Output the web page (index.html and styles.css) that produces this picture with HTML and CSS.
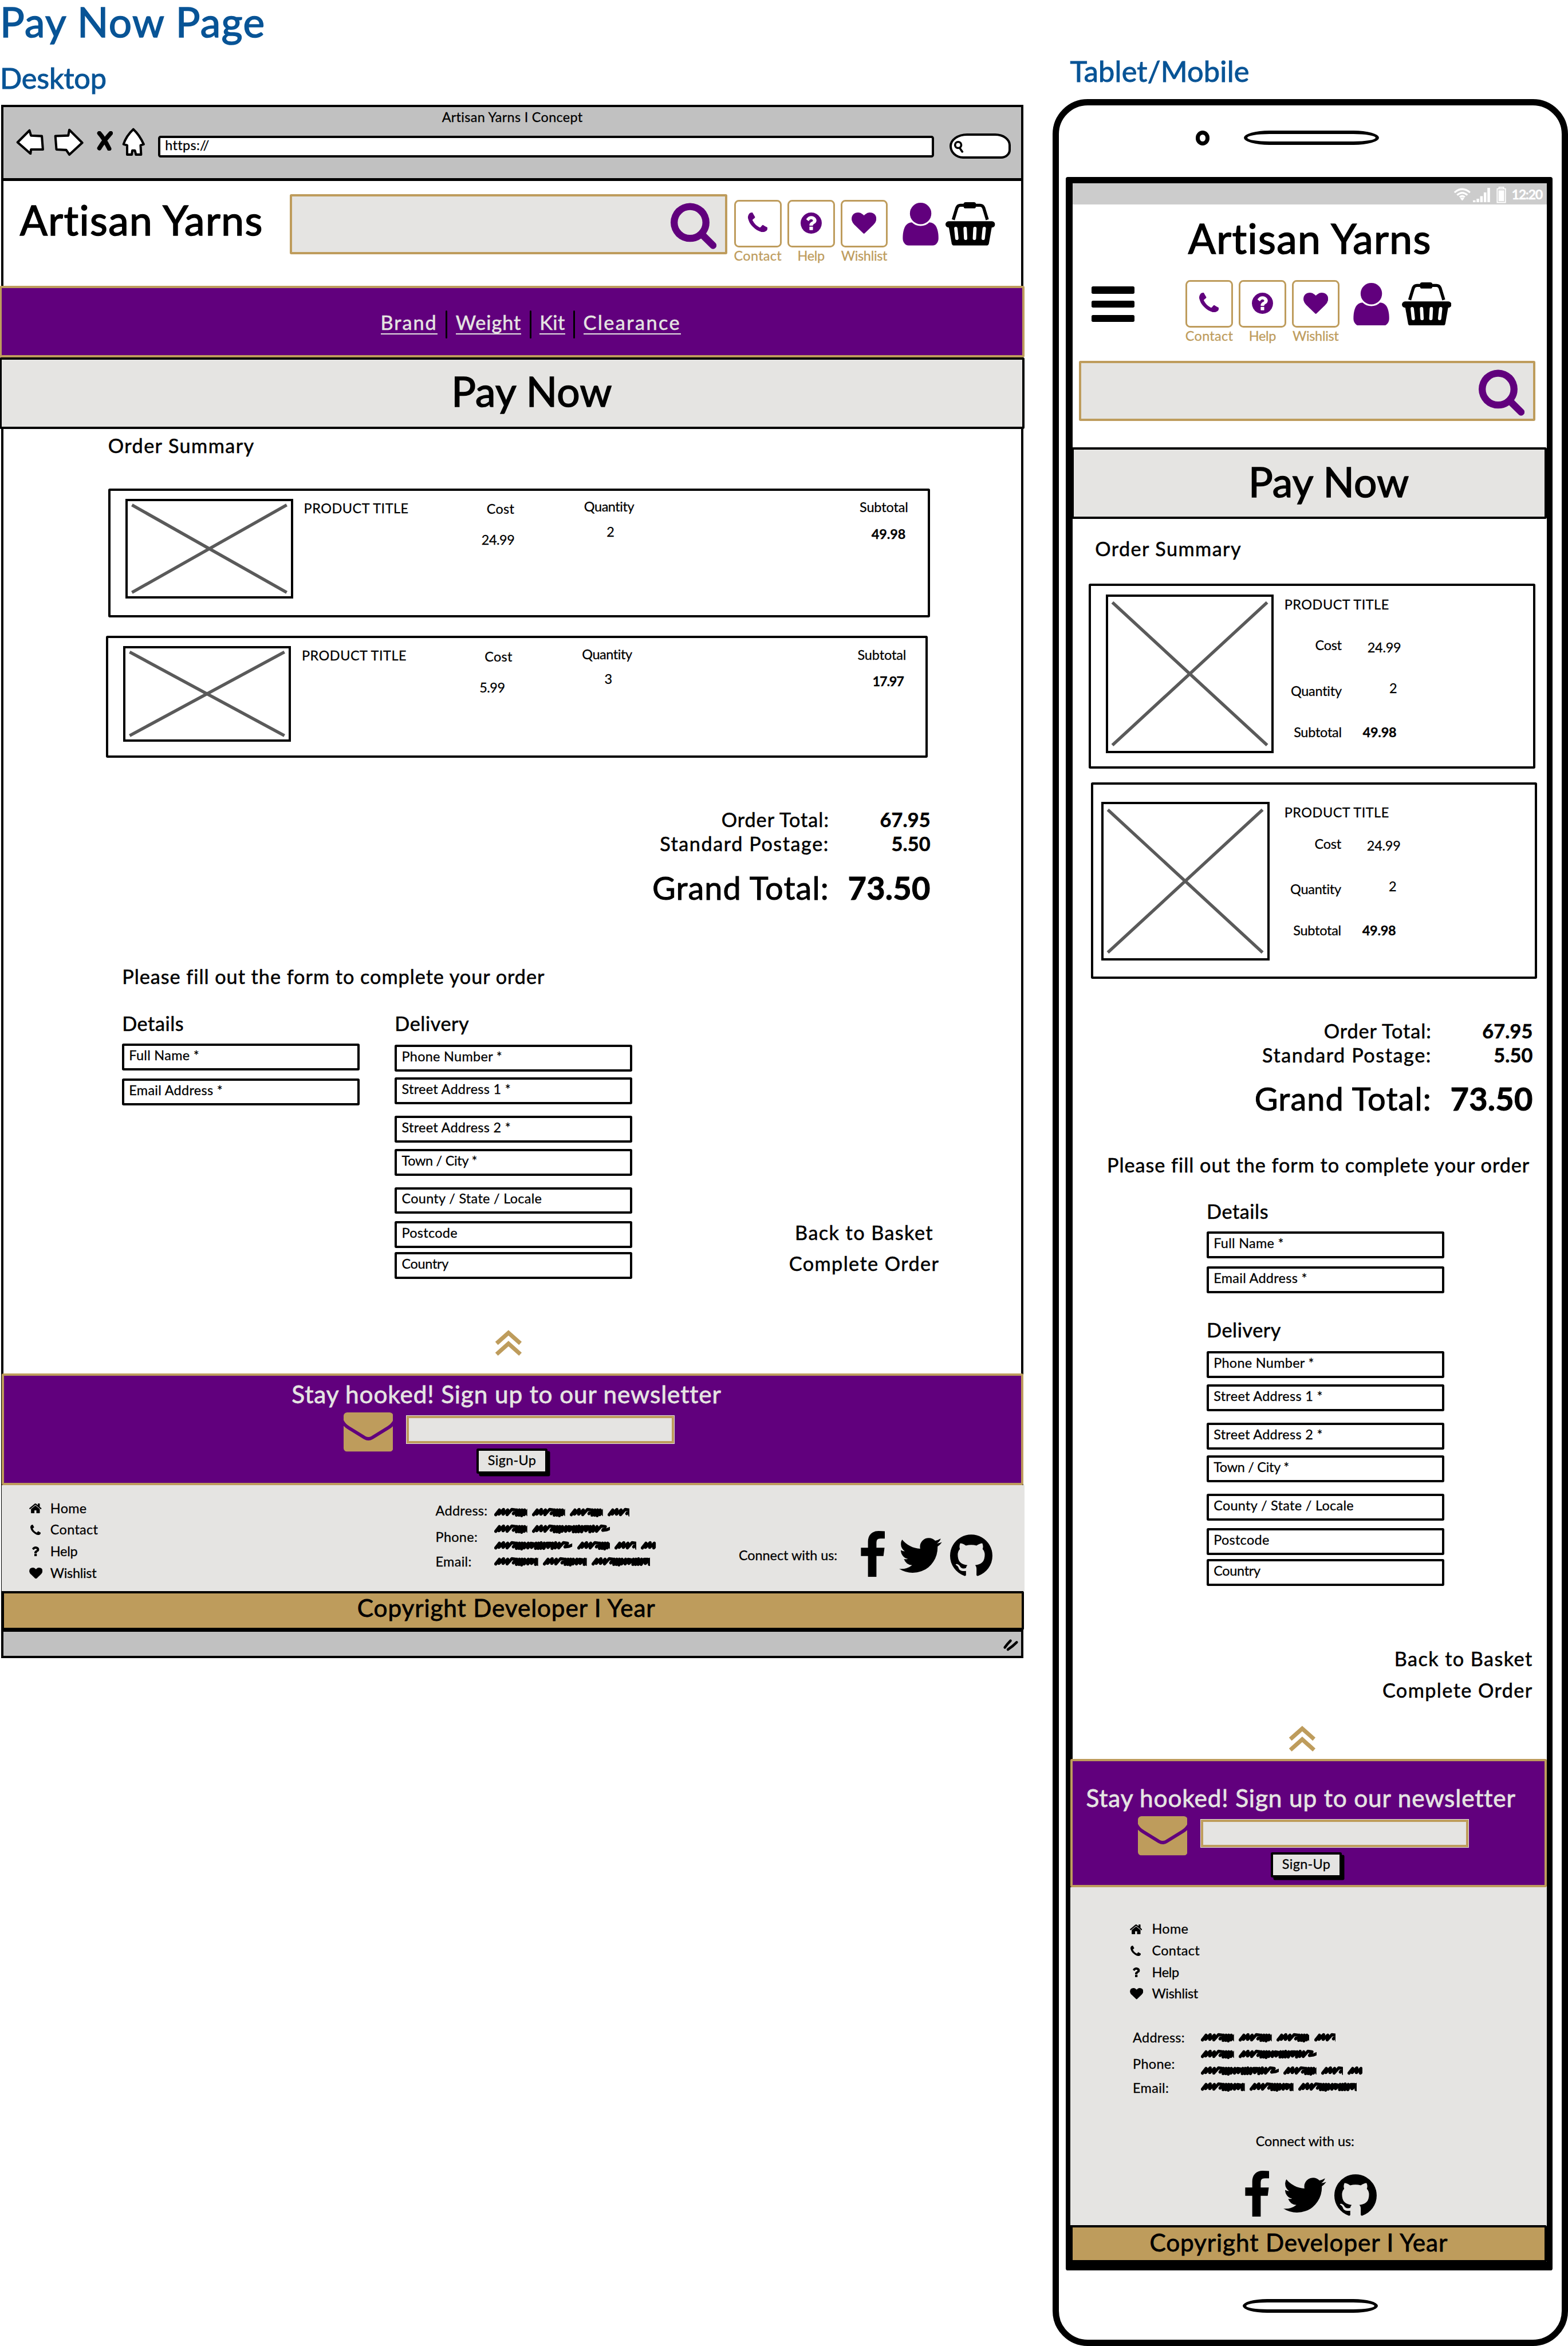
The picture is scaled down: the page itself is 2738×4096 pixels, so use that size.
FILE: index.html
```html
<!DOCTYPE html>
<html lang="en">
<head>
<meta charset="utf-8">
<title>Pay Now Page</title>
<link rel="stylesheet" href="styles.css">
</head>
<body>
<svg class="sprite" aria-hidden="true">
  <symbol id="i-search" viewBox="64 128 1664 1664"><path d="M1216 832q0-185-131.5-316.5T768 384 451.5 515.5 320 832t131.5 316.5T768 1280t316.5-131.5T1216 832zm512 832q0 52-38 90t-90 38q-54 0-90-38l-343-342q-179 124-399 124-143 0-273.5-55.5t-225-150-150-225T64 832t55.5-273.5 150-225 225-150T768 128t273.500 55.5 225 150 150 225T1472 832q0 220-124 399l343 343q37 37 37 90z"/></symbol>
  <symbol id="i-phone" viewBox="192 128 1408 1408"><path d="M1600 1240q0 27-10 70.5t-21 68.5q-21 50-122 106-94 51-186 51-27 0-53-3.500t-57.500-12.500-47-14.500-55.500-20.500-49-18q-98-35-175-83-127-79-264-216T344 904q-48-77-83-175-3-9-18-49t-20.500-55.500-14.500-47T195.500 520t-3.500-53q0-92 51-186 56-101 106-122 25-11 68.500-21t70.500-10q14 0 21 3 18 6 53 76 11 19 30 54t35 63.500 31 53.500q3 4 17.500 25t21.500 35.500 7 28.500q0 20-28.500 50t-62 55-62 53-28.500 46q0 9 5 22.500t8.500 20.500 14 24 11.500 19q76 137 174 235t235 174q2 1 19 11.500t24 14 20.500 8.500 22.500 5q18 0 46-28.500t53-62 55-62 50-28.500q14 0 28.500 7t35.500 21.500 25 17.500q25 15 53.500 31t63.500 35 54 30q70 35 76 53 3 7 3 21z"/></symbol>
  <symbol id="i-help" viewBox="128 128 1536 1536"><path d="M1024 1376v-192q0-14-9-23t-23-9h-192q-14 0-23 9t-9 23v192q0 14 9 23t23 9h192q14 0 23-9t9-23zm256-672q0-88-55.500-163t-138.500-116-170-41q-243 0-371 213-15 24 8 42l132 100q7 6 19 6 16 0 25-12 53-68 86-92 34-24 86-24 48 0 85.500 26t37.500 59q0 38-20 61t-68 45q-63 28-115.500 86.500t-52.500 125.500v36q0 14 9 23t23 9h192q14 0 23-9t9-23q0-19 21.500-49.500t54.500-49.500q32-18 49-28.500t46-35 44.500-48 28-60.500 12.500-81zm384 192q0 209-103 385.500t-279.500 279.500-385.500 103-385.500-103-279.500-279.500-103-385.500 103-385.500 279.500-279.500 385.500-103 385.500 103 279.500 279.500 103 385.500z"/></symbol>
  <symbol id="i-heart" viewBox="0 128 1792 1536"><path d="M896 1664q-26 0-44-18l-624-602q-10-8-27.500-26T145 952.500 77 855 23.500 734 0 596q0-220 127-344t351-124q62 0 126.500 21.500t120 58T820 276t76 68q36-36 76-68t95.500-68.500 120-58T1314 128q224 0 351 124t127 344q0 221-229 450l-623 600q-18 18-44 18z"/></symbol>
  <symbol id="i-user" viewBox="256 128 1280 1536"><path d="M1536 1399q0 109-62.500 187t-150.500 78h-854q-88 0-150.500-78t-62.500-187q0-85 8.500-160.500t31.500-152 58.500-131 94-89 134.500-34.500q131 128 313 128t313-128q76 0 134.500 34.500t94 89 58.500 131 31.500 152 8.500 160.500zm-256-887q0 159-112.500 271.500t-271.500 112.500-271.500-112.500-112.500-271.500 112.500-271.500 271.500-112.500 271.500 112.500 112.500 271.500z"/></symbol>
  <symbol id="i-basket" viewBox="0 0 96 84"><path d="M15 34 22 11q2-5 7-5h38q5 0 7 5l7 23" fill="none" stroke="currentColor" stroke-width="6"/><rect x="35" width="24" height="12" rx="4"/><rect y="37" width="96" height="12" rx="6"/><path d="M6 46h84l-6 34q-1 4-5 4H17q-4 0-5-4z"/><path d="M20 51l2 19M38 51l1 19M57 51l-1 19M75 51l-2 19" stroke="#fff" stroke-width="6.500" stroke-linecap="round"/></symbol>
  <symbol id="i-mail" viewBox="0 0 96 76"><rect width="96" height="76" rx="7"/><path d="M-4 14Q0 24 10 30L41 49q7 4 14 0L86 30Q96 24 100 14" fill="none" stroke="#61007d" stroke-width="6.500"/></symbol>
  <symbol id="i-up" viewBox="0 0 53 51"><path d="M3.500 26 26.500 5.500 49.500 26M3.500 47 26.500 26.500 49.500 47" fill="none" stroke="currentColor" stroke-width="8"/></symbol>
  <symbol id="i-facebook" viewBox="479 0 864 1664"><path d="M1343 12v264h-157q-86 0-116 36t-30 108v189h293l-39 296h-254v759H734V905H479V609h255V391q0-186 104-288.500T1115 0q147 0 228 12z"/></symbol>
  <symbol id="i-twitter" viewBox="108 256 1576 1280"><path d="M1684 408q-67 98-162 167 1 14 1 42 0 130-38 259.500T1369.500 1125 1185 1335.500t-258 146-323 54.500q-271 0-496-145 35 4 78 4 225 0 401-138-105-2-188-64.500T285 1033q33 5 61 5 43 0 85-11-112-23-185.500-111.500T172 710v-4q68 38 146 41-66-44-105-115t-39-154q0-88 44-163 121 149 294.500 238.500T884 653q-8-38-8-74 0-134 94.500-228.500T1199 256q140 0 236 102 109-21 205-78-37 115-142 178 93-10 186-50z"/></symbol>
  <symbol id="i-github" viewBox="128 128 1536 1502"><path d="M896 128q209 0 385.500 103t279.500 279.500 103 385.500q0 251-146.500 451.500t-378.500 277.500q-27 5-40-7t-13-30q0-3 .5-76.500t.5-134.500q0-97-52-142 57-6 102.500-18t94-39 81-66.500 53-105 20.500-150.500q0-119-79-206 37-91-8-204-28-9-81 11t-92 44l-38 24q-93-26-192-26t-192 26q-16-11-42.500-27t-83.500-38.500-85-13.500q-45 113-8 204-79 87-79 206 0 85 20.500 150t52.500 105 80.500 67 94 39 102.500 18q-39 36-49 103-21 10-45 15t-57 5-65.500-21.500-55.500-62.500q-19-32-48.500-52t-49.500-24l-20-3q-21 0-29 4.500t-5 11.500 9 14 13 12l7 5q22 10 43.500 38t31.500 51l10 23q13 38 44 61.500t67 30 69.500 7 55.500-3.500l23-4q0 38 .5 88.500t.5 54.500q0 18-13 30t-40 7q-232-77-378.500-277.500t-146.500-451.500q0-209 103-385.500t279.500-279.500 385.500-103z"/></symbol>
  <symbol id="i-home" viewBox="90 253 1612 1283"><path d="M1472 992v480q0 26-19 45t-45 19h-384v-384h-256v384H384q-26 0-45-19t-19-45V992q0-1 .5-3t.5-3l575-474 575 474q1 2 1 6zm223-69l-62 74q-8 9-21 11h-3q-13 0-21-7L896 424l-692 577q-12 8-24 7-13-2-21-11l-62-74q-8-10-7-23.500t11-21.500l719-599q32-26 76-26t76 26l244 204V288q0-14 9-23t23-9h192q14 0 23 9t9 23v408l219 182q10 8 11 21.500t-7 23.500z"/></symbol>
  <symbol id="i-question" viewBox="479 256 926 1280"><path d="M1088 1256v240q0 16-12 28t-28 12H808q-16 0-28-12t-12-28v-240q0-16 12-28t28-12h240q16 0 28 12t12 28zm316-600q0 54-15.500 101t-35 76.500-55 59.500-57.500 43.500-61 35.500q-41 23-68.500 65t-27.500 67q0 17-12 32.500t-28 15.500H804q-15 0-25.500-18.500T768 1096v-45q0-83 65-156.500T976 786q59-27 84-56t25-76q0-42-46.500-74T931 548q-65 0-108 29-35 25-107 115-13 16-31 16-12 0-25-8L496 575q-13-10-15.500-25t5.500-28q160-266 464-266 80 0 161 31t146 83 106 127.500 41 158.500z"/></symbol>
  <symbol id="i-cross" viewBox="0 0 100 100" preserveAspectRatio="none"><path d="M2 3 98 97M98 3 2 97" stroke="#5a5a5a" stroke-width="5.500" vector-effect="non-scaling-stroke"/></symbol>
  <symbol id="i-scribble" viewBox="0 0 160 20" preserveAspectRatio="xMinYMid slice"><path d="M3 15 10 6 9 14 18 5 17 14 26 6 25 15 34 5 42 6 37 13 44 6 43 16 49 6 48 16 54 6 53 17 59 6 58 15 66 6 65 15 71 6 77 7 72 14 81 6 80 16 86 6 85 16 91 5 90 16 97 6 96 16 102 6 109 6 104 14 113 6 112 16 119 5 118 15 126 6 125 15 134 5 142 6 137 13 145 12 152 9" fill="none" stroke="#000" stroke-width="6" stroke-linejoin="round" stroke-linecap="round"/></symbol>
</svg>

<div class="board">
<section class="desktop">
  <h1 class="title">Pay Now Page</h1>
  <h2 class="subtitle">Desktop</h2>
  <div class="window">
    <div class="chrome">
      <p class="small chrome-title">Artisan Yarns I Concept</p>
      <div class="chrome-row">
        <svg class="back" viewBox="0 0 54 50"><path d="M3 26 26 3 29 13 50 14 52 40 29 40 28 48Z"/></svg>
        <svg class="forward" viewBox="0 0 58 54"><path d="M3 15 28 14 30 3 55 28 30 51 24 42 5 41Z"/></svg>
        <svg class="stop" viewBox="0 0 31 38"><path d="M5 4Q14 14 24 34M27 4Q14 18 5 33"/></svg>
        <svg class="home" viewBox="0 0 45 55"><path d="M22 3Q34 14 42 32L36 34 37 52 27 52 25 44 20 44 19 52 10 52 10 34 3 32Q8 16 22 3Z"/></svg>
        <div class="url small">https://</div>
        <div class="pill"><svg viewBox="0 0 20 24"><circle cx="9" cy="9" r="6"/><path d="M12 15 17 22"/></svg></div>
      </div>
    </div>
    <header class="header">
      <p class="brand">Artisan Yarns</p>
      <div class="search"><svg><use href="#i-search"/></svg></div>
      <div class="tools">
        <div class="tool"><span class="tool-box"><svg class="ic-phone"><use href="#i-phone"/></svg></span><span class="small">Contact</span></div>
        <div class="tool"><span class="tool-box"><svg class="ic-help"><use href="#i-help"/></svg></span><span class="small tight">Help</span></div>
        <div class="tool"><span class="tool-box"><svg class="ic-heart"><use href="#i-heart"/></svg></span><span class="small tight">Wishlist</span></div>
      </div>
      <svg class="user"><use href="#i-user"/></svg>
      <svg class="basket"><use href="#i-basket"/></svg>
    </header>
    <nav class="nav"><a class="link">Brand</a><i></i><a class="link">Weight</a><i></i><a class="link">Kit</a><i></i><a class="link">Clearance</a></nav>
    <h3 class="heading"><span>Pay Now</span></h3>
    <main class="main">
      <h4 class="summary text">Order Summary</h4>
      <article class="card">
        <svg class="thumb"><use href="#i-cross" width="100%" height="100%"/></svg>
        <p class="name small">PRODUCT TITLE</p>
        <div class="cost"><p class="small">Cost</p><p class="small">24.99</p></div>
        <div class="qty"><p class="small">Quantity</p><p class="small">2</p></div>
        <div class="sub"><p class="small">Subtotal</p><p class="small strong">49.98</p></div>
      </article>
      <article class="card second">
        <svg class="thumb"><use href="#i-cross" width="100%" height="100%"/></svg>
        <p class="name small">PRODUCT TITLE</p>
        <div class="cost"><p class="small">Cost</p><p class="small">5.99</p></div>
        <div class="qty"><p class="small">Quantity</p><p class="small">3</p></div>
        <div class="sub"><p class="small">Subtotal</p><p class="small strong narrow">17.97</p></div>
      </article>
      <dl class="totals">
        <div class="text"><dt>Order Total:</dt><dd>67.95</dd></div>
        <div class="text postage"><dt>Standard Postage:</dt><dd>5.50</dd></div>
        <div class="grand"><dt>Grand Total:</dt><dd>73.50</dd></div>
      </dl>
      <form class="form">
        <p class="text"><span class="prompt">Please fill out the form to complete your order</span></p>
        <div class="columns">
          <div class="group details"><h5 class="text">Details</h5>
            <div class="field small">Full Name *</div><div class="field small">Email Address *</div></div>
          <div class="group delivery"><h5 class="text">Delivery</h5>
            <div class="field small">Phone Number *</div><div class="field small">Street Address 1 *</div><div class="field small">Street Address 2 *</div><div class="field small tight">Town / City *</div><div class="field small">County / State / Locale</div><div class="field small">Postcode</div><div class="field small tight">Country</div></div>
          <div class="actions"><a class="text">Back to Basket</a><a class="text">Complete Order</a></div>
        </div>
      </form>
      <svg class="top"><use href="#i-up"/></svg>
    </main>
    <section class="newsletter"><div class="signup">
      <p class="lead">Stay hooked! Sign up to our newsletter</p>
      <div class="signup-row"><svg class="mail"><use href="#i-mail"/></svg><div class="signup-input"></div></div>
      <div class="button small">Sign-Up</div>
    </div></section>
    <footer class="footer">
      <ul class="links">
        <li><svg class="l-home"><use href="#i-home"/></svg><span class="small">Home</span></li>
        <li><svg class="l-phone"><use href="#i-phone"/></svg><span class="small">Contact</span></li>
        <li><svg class="l-help"><use href="#i-question"/></svg><span class="small tight">Help</span></li>
        <li><svg class="l-heart"><use href="#i-heart"/></svg><span class="small tight">Wishlist</span></li>
      </ul>
      <div class="contact">
        <div class="labels"><p class="small">Address:</p><p class="small">Phone:</p><p class="small">Email:</p></div>
        <div class="scribbles">
          <p><svg class="w64"><use href="#i-scribble"/></svg><svg class="w64"><use href="#i-scribble"/></svg><svg class="w64"><use href="#i-scribble"/></svg><svg class="w42"><use href="#i-scribble"/></svg></p>
          <p><svg class="w64"><use href="#i-scribble"/></svg><svg class="w151"><use href="#i-scribble"/></svg></p>
          <p><svg class="w151"><use href="#i-scribble"/></svg><svg class="w64"><use href="#i-scribble"/></svg><svg class="w42"><use href="#i-scribble"/></svg><svg class="w29"><use href="#i-scribble"/></svg></p>
          <p><svg class="w85"><use href="#i-scribble"/></svg><svg class="w85"><use href="#i-scribble"/></svg><svg class="w113"><use href="#i-scribble"/></svg></p>
        </div>
      </div>
      <div class="connect"><p class="small">Connect with us:</p>
        <div class="social"><svg class="facebook"><use href="#i-facebook"/></svg><svg class="twitter"><use href="#i-twitter"/></svg><svg class="github"><use href="#i-github"/></svg></div></div>
    </footer>
    <p class="copyright"><span>Copyright Developer I Year</span></p>
    <div class="statusbar"><svg viewBox="0 0 31 25"><path d="M4 17Q9 10 15 4M10 21Q19 15 27 7"/></svg></div>
  </div>
</section>

<section class="mobile">
  <h2 class="subtitle">Tablet/Mobile</h2>
  <div class="device">
    <div class="earpiece"><span class="camera"></span><span class="speaker"></span></div>
    <div class="screen">
      <div class="status">
        <svg class="wifi" viewBox="0 0 34 25"><path d="M2 9Q17-4 32 9M7 14Q17 5 27 14M12 18Q17 13 22 18" fill="none" stroke="#fff" stroke-width="3.500"/><path d="M13 20Q17 17 21 20L17 25Z" fill="#fff"/></svg>
        <svg class="signal" viewBox="0 0 34 28"><path d="M0 24h5v4H0zM7 21h5v7H7zM14 16h5v12h-5zM21 9h5v19h-5zM28 0h5v28h-5z" fill="#fff"/></svg>
        <svg class="battery" viewBox="0 0 19 32"><path d="M1.500 4h16v26.500h-16zM5 1h9v3H5z" fill="none" stroke="#fff" stroke-width="2"/><path d="M4 7h11v21H4z" fill="#fff"/></svg>
        <span class="small clock">12:20</span>
      </div>
      <p class="brand">Artisan Yarns</p>
      <div class="toolbar">
        <div class="menu"><i></i><i></i><i></i></div>
        <div class="tools">
          <div class="tool"><span class="tool-box"><svg class="ic-phone"><use href="#i-phone"/></svg></span><span class="small">Contact</span></div>
          <div class="tool"><span class="tool-box"><svg class="ic-help"><use href="#i-help"/></svg></span><span class="small tight">Help</span></div>
          <div class="tool"><span class="tool-box"><svg class="ic-heart"><use href="#i-heart"/></svg></span><span class="small tight">Wishlist</span></div>
        </div>
        <svg class="user"><use href="#i-user"/></svg>
        <svg class="basket"><use href="#i-basket"/></svg>
      </div>
      <div class="search"><svg><use href="#i-search"/></svg></div>
      <h3 class="heading"><span>Pay Now</span></h3>
      <h4 class="summary text">Order Summary</h4>
      <article class="item">
        <svg class="thumb"><use href="#i-cross" width="100%" height="100%"/></svg>
        <div class="info"><p class="name small">PRODUCT TITLE</p>
          <dl><dt class="small">Cost</dt><dd class="small">24.99</dd><dt class="small">Quantity</dt><dd class="small">2</dd><dt class="small">Subtotal</dt><dd class="small strong">49.98</dd></dl></div>
      </article>
      <article class="item second">
        <svg class="thumb"><use href="#i-cross" width="100%" height="100%"/></svg>
        <div class="info"><p class="name small">PRODUCT TITLE</p>
          <dl><dt class="small">Cost</dt><dd class="small">24.99</dd><dt class="small">Quantity</dt><dd class="small">2</dd><dt class="small">Subtotal</dt><dd class="small strong">49.98</dd></dl></div>
      </article>
      <dl class="totals">
        <div class="text"><dt>Order Total:</dt><dd>67.95</dd></div>
        <div class="text postage"><dt>Standard Postage:</dt><dd>5.50</dd></div>
        <div class="grand"><dt>Grand Total:</dt><dd>73.50</dd></div>
      </dl>
      <form class="form">
        <p class="text"><span class="prompt">Please fill out the form to complete your order</span></p>
        <div class="group details"><h5 class="text">Details</h5>
          <div class="field small">Full Name *</div><div class="field small">Email Address *</div></div>
        <div class="group delivery"><h5 class="text">Delivery</h5>
          <div class="field small">Phone Number *</div><div class="field small">Street Address 1 *</div><div class="field small">Street Address 2 *</div><div class="field small tight">Town / City *</div><div class="field small">County / State / Locale</div><div class="field small">Postcode</div><div class="field small tight">Country</div></div>
        <div class="actions"><a class="text">Back to Basket</a><a class="text">Complete Order</a></div>
      </form>
      <svg class="top"><use href="#i-up"/></svg>
      <section class="newsletter"><div class="signup">
        <p class="lead">Stay hooked! Sign up to our newsletter</p>
        <div class="signup-row"><svg class="mail"><use href="#i-mail"/></svg><div class="signup-input"></div></div>
        <div class="button small">Sign-Up</div>
      </div></section>
      <footer class="footer">
        <ul class="links">
          <li><svg class="l-home"><use href="#i-home"/></svg><span class="small">Home</span></li>
          <li><svg class="l-phone"><use href="#i-phone"/></svg><span class="small">Contact</span></li>
          <li><svg class="l-help"><use href="#i-question"/></svg><span class="small tight">Help</span></li>
          <li><svg class="l-heart"><use href="#i-heart"/></svg><span class="small tight">Wishlist</span></li>
        </ul>
        <div class="contact">
          <div class="labels"><p class="small">Address:</p><p class="small">Phone:</p><p class="small">Email:</p></div>
          <div class="scribbles">
            <p><svg class="w64"><use href="#i-scribble"/></svg><svg class="w64"><use href="#i-scribble"/></svg><svg class="w64"><use href="#i-scribble"/></svg><svg class="w42"><use href="#i-scribble"/></svg></p>
            <p><svg class="w64"><use href="#i-scribble"/></svg><svg class="w151"><use href="#i-scribble"/></svg></p>
            <p><svg class="w151"><use href="#i-scribble"/></svg><svg class="w64"><use href="#i-scribble"/></svg><svg class="w42"><use href="#i-scribble"/></svg><svg class="w29"><use href="#i-scribble"/></svg></p>
            <p><svg class="w85"><use href="#i-scribble"/></svg><svg class="w85"><use href="#i-scribble"/></svg><svg class="w113"><use href="#i-scribble"/></svg></p>
          </div>
        </div>
        <div class="connect"><p class="small">Connect with us:</p>
          <div class="social"><svg class="facebook"><use href="#i-facebook"/></svg><svg class="twitter"><use href="#i-twitter"/></svg><svg class="github"><use href="#i-github"/></svg></div></div>
      </footer>
      <p class="copyright"><span>Copyright Developer I Year</span></p>
    </div>
    <span class="speaker home-key"></span>
  </div>
</section>
</div>
</body>
</html>
```
FILE: styles.css
```css
/* 1rem is ten units of the drawing */
html { font-size: 9.018px; }
* { box-sizing: border-box; margin: 0; padding: 0; }
body {
  background: #fff; color: #000; overflow: hidden;
  font-family: Lato, "Noto Sans", sans-serif; font-size: 2.6rem; line-height: 1;
}
h1, h2, h3, h4, h5 { font-weight: 400; }
svg { display: block; fill: currentColor; flex: none; }
ul { list-style: none; }
.sprite { width: 0; height: 0; position: absolute; }
.board { display: flex; height: 4096px; overflow: hidden; padding-top: .2rem; }
.board p, .board h1, .board h2, .board h3, .board h4, .board h5, .board a, .board dt, .board dd, .board span, .board .field { white-space: nowrap; }

.title, .brand, .heading { font-size: 7.9rem; -webkit-text-stroke: .022em; letter-spacing: .02em; }
.heading { letter-spacing: .004em; }
.subtitle { font-size: 5.6rem; -webkit-text-stroke: .02em; letter-spacing: -.004em; }
.lead, .copyright { font-size: 4.7rem; -webkit-text-stroke: .018em; letter-spacing: .02em; }
.text, .link { font-size: 3.8rem; -webkit-text-stroke: .016em; letter-spacing: .028em; }
.grand { font-size: 6.2rem; -webkit-text-stroke: .018em; letter-spacing: .02em; }
.small { font-size: 2.6rem; -webkit-text-stroke: .012em; letter-spacing: .013em; }
.tight { letter-spacing: -.012em; }
.strong { font-weight: 700; letter-spacing: -.004em; }
.narrow { letter-spacing: -.05em; }
.title, .subtitle { color: #085496; }
h5.text { letter-spacing: .016em; }
.summary.text, .actions .text { letter-spacing: .041em; }
.postage dt { letter-spacing: .045em; }
.totals dd { letter-spacing: .004em; }

.desktop { width: 203.8rem; flex: none; }
.subtitle { margin-top: 4.2rem; }
.window {
  width: 198rem; height: 300.7rem; margin: 2.4rem 0 0 .2rem;
  border: .5rem solid #000; display: flex; flex-direction: column;
}
.window > * { flex: none; }

.chrome { height: 14.3rem; background: #c1c1c1; border-bottom: .6rem solid #000; padding: .7rem 0 0 2.5rem; }
.chrome-title { text-align: center; margin-left: -2.5rem; }
.chrome-row { display: flex; align-items: flex-start; margin-top: .7rem; }
.chrome-row svg { fill: #fff; stroke: #000; stroke-width: 4.500; stroke-linejoin: round; stroke-linecap: round; }
.back { width: 5.4rem; height: 5rem; margin: .2rem 1.9rem 0 0; }
.forward { width: 5.8rem; height: 5.4rem; margin: .1rem 2.5rem 0 0; }
.chrome-row .stop { width: 3.1rem; height: 3.8rem; margin: .6rem 1.8rem 0 0; stroke-width: 8.500; fill: none; }
.home { width: 4.5rem; height: 5.5rem; margin-right: 2.5rem; }
.url { width: 150.2rem; height: 4.2rem; margin: 1.5rem 3rem 0 0; background: #fff; border: .45rem solid #000; border-radius: .5rem; padding: .2rem 0 0 .9rem; }
.pill { width: 11.9rem; height: 4.9rem; margin-top: 1.1rem; background: #fff; border: .5rem solid #000; border-radius: 3.6rem 3.2rem 2rem 2.8rem / 2.6rem 2.4rem 1.8rem 2.6rem; }
.pill svg { width: 2rem; height: 2.4rem; margin: .9rem 0 0 .3rem; stroke-width: 4; }

.header { height: 20.3rem; display: flex; align-items: flex-start; padding-left: 3.2rem; }
.header .brand { width: 52.3rem; margin-top: 3.5rem; }
.search { width: 84.7rem; height: 11.7rem; background: #e5e4e2; border: .5rem solid #be9c5c; border-radius: .3rem; display: flex; justify-content: flex-end; color: #61007d; }
.search svg { width: 8.9rem; height: 9rem; margin: 1.3rem 1.6rem 0 0; }
.header .search { margin: 2.5rem 1.3rem 0 0; }
.tools { display: flex; gap: 1.1rem; color: #be9c5c; }
.header .tools { margin: 3.7rem 2.8rem 0 0; }
.tool { width: 9.2rem; display: flex; flex-direction: column; align-items: center; gap: .3rem; }
.tool-box { width: 9.2rem; height: 9.2rem; border: .4rem solid; border-radius: .9rem; display: flex; align-items: flex-start; justify-content: center; padding-top: 2.1rem; }
.tool-box svg { color: #61007d; }
.ic-phone { width: 3.8rem; height: 3.8rem; }
.ic-help { width: 4.1rem; height: 4.1rem; }
.ic-heart { width: 4.8rem; height: 4.1rem; }
.user { width: 7rem; height: 8.3rem; color: #61007d; }
.basket { width: 9.6rem; height: 8.4rem; }
.header .user { margin: 4.2rem 1.4rem 0 0; }
.header .basket { margin-top: 4.1rem; }

.nav { height: 13.8rem; margin: 0 -.6rem 0 -.7rem; background: #61007d; border: .5rem solid #be9c5c; border-radius: .3rem; padding: 4.3rem 0 0 73.3rem; display: flex; gap: 1.6rem; color: #e5e4e2; }
.link { margin-top: .5rem; height: 4.2rem; border-bottom: .3rem solid; }
.link:nth-of-type(1) { letter-spacing: .058em; }
.link:nth-of-type(3) { letter-spacing: .01em; }
.link:nth-of-type(4) { letter-spacing: .071em; }
.nav i { width: .35rem; height: 5.5rem; background: #000; border-radius: .2rem; }
.heading { height: 13.9rem; background: #e5e4e2; border: .45rem solid #000; border-radius: .3rem; text-align: center; padding: 2.2rem 0 0 7.6rem; }
.window .heading { margin: 0 -.6rem 0 -.7rem; }

.main { height: 182.9rem; }
.window .summary { margin: 1.4rem 0 0 20.3rem; }
.card { width: 159.1rem; height: 25rem; margin: 6.3rem 0 0 20.3rem; border: .5rem solid #000; border-radius: .3rem; display: flex; align-items: flex-start; }
.thumb { width: 32.5rem; border: .5rem solid #000; padding: .2rem; overflow: visible; }
.card .thumb { height: 19.3rem; margin: 1.55rem 2.1rem 0 2.85rem; }
.card .name { width: 34.4rem; margin-top: 2.1rem; }
.board .name { letter-spacing: .022em; }
.cost { width: 19.8rem; margin-top: 2.3rem; }
.cost p:first-child { margin-left: 1rem; }
.cost p + p { margin-top: 3.4rem; letter-spacing: -.02em; }
.qty { width: 9.8rem; margin-top: 1.85rem; text-align: center; }
.qty p { letter-spacing: -.018em; }
.qty p + p { margin: 2.2rem 0 0 .5rem; }
.sub { margin: 1.9rem 3.75rem 0 auto; text-align: right; }
.sub p:first-child { letter-spacing: -.004em; }
.sub p + p { margin: 2.6rem .5rem 0 0; }
.card.second { height: 23.6rem; margin: 3.6rem 0 0 19.9rem; }
.card.second .thumb { height: 18.5rem; }

.totals { display: flex; flex-direction: column; gap: .85rem; margin-top: 10.1rem; padding-right: 17.6rem; }
.totals div { display: flex; justify-content: flex-end; }
.totals dd { width: 19.6rem; text-align: right; font-weight: 700; }
.totals .grand { margin-top: 2.6rem; }

.form { margin-top: 12.3rem; padding-left: 23rem; }
.form > p { margin-bottom: 5.2rem; }
.columns { display: flex; }
.group { width: 46rem; }
.field { height: 5.2rem; border: .5rem solid #000; border-radius: .3rem; padding: .55rem 0 0 .9rem; }
.details { margin-right: 6.8rem; }
.details .field:nth-of-type(1) { margin-top: 2rem; }
.details .field:nth-of-type(2) { margin-top: 1.6rem; }
.delivery .field:nth-of-type(1) { margin-top: 2.2rem; }
.delivery .field:nth-of-type(even) { margin-top: 1.2rem; }
.delivery .field:nth-of-type(3), .delivery .field:nth-of-type(5) { margin-top: 2.2rem; }
.delivery .field:nth-of-type(6) { margin-top: 1.4rem; }
.delivery .field:nth-of-type(7) { margin-top: .8rem; }
.actions { display: flex; flex-direction: column; align-items: center; gap: 2.2rem; }
.window .actions { width: 29rem; margin: 40.5rem 0 0 30.4rem; }
.top { width: 5.3rem; height: 5.1rem; color: #be9c5c; margin: 9.9rem 0 0 95.2rem; }

.newsletter { height: 21.6rem; margin: 0 -.4rem 0 -.3rem; background: #61007d; border: .5rem solid #be9c5c; border-radius: .3rem; padding: 1.2rem 0 0 55.5rem; color: #e5e4e2; }
.signup { width: 83.6rem; }
.lead { text-align: center; }
.signup-row { display: flex; align-items: flex-start; gap: 2.6rem; margin: 1.2rem 0 0 10.2rem; }
.mail { width: 9.6rem; height: 7.6rem; color: #be9c5c; }
.signup-input { width: 51.8rem; height: 5.4rem; margin-top: .6rem; background: #e5e4e2; border: .5rem solid #be9c5c; outline: 1px solid #e5e4e2; }
.button { width: 13.7rem; height: 4.8rem; margin: -.6rem 0 0 36rem; border: .5rem solid #000; border-radius: .3rem; background: #e5e4e2; color: #000; text-align: center; padding-top: .55rem; box-shadow: .5rem .5rem #000; }

.footer { background: #e5e4e2; }
.window .footer { height: 20.5rem; margin: 0 -.6rem 0 -.3rem; padding-left: 5.3rem; display: flex; align-items: flex-start; }
.links li { display: flex; align-items: center; height: 4.18rem; width: 20.1rem; }
.links svg { margin-right: auto; }
.links .small { width: 16rem; }
.l-home { width: 2.4rem; height: 1.9rem; }
.l-phone { width: 2rem; height: 2rem; margin-left: .2rem; }
.l-help { width: 1.4rem; height: 1.9rem; margin-left: .6rem; }
.l-heart { width: 2.6rem; height: 2.2rem; }
.window .links { margin: 2.4rem 58.6rem 0 0; }
.contact { display: flex; align-items: flex-start; }
.labels { width: 11.4rem; }
.labels p:nth-child(2) { margin-top: 2.5rem; }
.labels p:nth-child(3) { margin-top: 2.1rem; }
.window .contact { width: 58.7rem; margin-top: 3.7rem; }
.scribbles { margin-top: .5rem; }
.scribbles p { display: flex; gap: .9rem; height: 3.2rem; }
.scribbles svg { height: 2rem; overflow: hidden; }
.w29 { width: 2.9rem; } .w42 { width: 4.2rem; } .w64 { width: 6.4rem; } .w85 { width: 8.5rem; } .w113 { width: 11.3rem; } .w151 { width: 15.1rem; }
.window .connect { display: flex; align-items: flex-start; margin-top: 8.9rem; }
.connect p { letter-spacing: -.002em; }
.window .connect p { width: 23.6rem; margin-top: 3.4rem; }
.social { display: flex; align-items: flex-start; }
.facebook { width: 4.7rem; height: 8.9rem; margin-right: 2.8rem; }
.twitter { width: 8.3rem; height: 7rem; margin: 1.2rem 1.5rem 0 0; }
.github { width: 8.2rem; height: 8.1rem; margin-top: .6rem; }
.copyright { height: 7.6rem; background: #be9c5c; border: .5rem solid #000; border-radius: .3rem; text-align: center; padding: .5rem 2.5rem 0 0; }
.window .copyright { margin: 0 -.5rem 0 -.3rem; }
.window .statusbar { flex: 1; background: #c1c1c1; border-top: .4rem solid #000; display: flex; justify-content: flex-end; }
.statusbar svg { width: 3.1rem; height: 2.5rem; margin: 1.3rem .5rem 0 0; fill: none; stroke: #000; stroke-width: 5; stroke-linecap: round; }

.mobile { width: 99.8rem; flex: none; }
.mobile .subtitle { margin: 10.8rem 0 0 3.4rem; letter-spacing: .004em; }
.device { height: 435rem; margin-top: 2.6rem; border: 1.3rem solid #000; border-radius: 6.8rem; }
.earpiece { display: flex; padding: 4.9rem 0 0 26.5rem; height: 13.9rem; }
.camera { width: 2.7rem; height: 2.8rem; border: .8rem solid #000; border-radius: 50%; margin-right: 6.6rem; }
.speaker { display: block; width: 26.2rem; height: 2.7rem; border: .75rem solid #000; border-radius: 5rem / 1.4rem; }
.home-key { margin: 5.5rem 0 0 35.6rem; }
.screen { width: 94.2rem; height: 405.3rem; margin-left: 1.4rem; border: solid #000; border-width: 1.3rem 1.2rem 1.7rem 1.4rem; border-radius: .4rem; }
.status { height: 4.1rem; background: #ccc; display: flex; justify-content: flex-end; padding: .6rem .9rem 0 0; color: #fff; }
.wifi { width: 3.4rem; height: 2.5rem; margin: .2rem .4rem 0 0; }
.signal { width: 3.4rem; height: 2.8rem; margin: .2rem 1.2rem 0 0; }
.battery { width: 1.9rem; height: 3.2rem; margin-right: 1rem; }
.clock { margin-top: .2rem; font-weight: 700; letter-spacing: -.06em; }
.mobile .brand { text-align: center; margin-top: 2.5rem; }
.toolbar { display: flex; align-items: flex-start; margin-top: 4.2rem; padding-left: 3.6rem; height: 12.1rem; }
.menu { width: 8.3rem; display: flex; flex-direction: column; gap: 1.35rem; margin: 1.2rem 9.9rem 0 0; }
.menu i { height: 1.4rem; background: #000; border-radius: .3rem; }
.toolbar .user { margin: .5rem 2.4rem 0 2.7rem; }
.toolbar .basket { margin-top: .4rem; }
.mobile .search { width: 88.3rem; margin: 3.5rem 0 5.1rem 1.2rem; }
.mobile .heading { margin-left: -.3rem; height: 13.8rem; }
.mobile .summary { margin: 3.9rem 0 0 4.3rem; }
.item { width: 86.5rem; height: 35.8rem; margin: 4.9rem 0 0 3rem; border: .45rem solid #000; border-radius: .3rem; display: flex; align-items: flex-start; }
.item .thumb { height: 30.7rem; margin: 1.6rem 2.1rem 0 2.9rem; }
.item .name { margin-top: 2.3rem; }
.item dl { display: grid; grid-template-columns: 11.1rem 11.5rem; margin-top: 5.3rem; text-align: right; }
.item dt, .item dd { letter-spacing: -.01em; }
.item dt { margin-bottom: 6.2rem; }
.item dt:nth-of-type(2) { margin-bottom: 5.4rem; }
.item dd:nth-of-type(1) { margin-top: .4rem; }
.item dd:nth-of-type(2) { margin: -.5rem .8rem 0 0; }
.item dd:nth-of-type(3) { margin-right: .9rem; }
.item.second { width: 86.4rem; height: 38.1rem; margin: 2.6rem 0 0 3.5rem; }
.item.second .thumb { margin: 3.4rem 2.9rem 0 1.6rem; }
.item.second .name { margin-top: 4.1rem; }
.item.second dl { margin: 3.5rem 0 0 -.1rem; }
.mobile .totals { margin-top: 8.2rem; padding-right: 2.7rem; }
.mobile .form { margin-top: 7.8rem; padding: 0 2.7rem 0 6.6rem; }
.mobile .group { margin-left: 19.3rem; }
.mobile .delivery { margin-top: 5.2rem; }
.mobile .actions { align-items: flex-end; gap: 2.3rem; margin-top: 12.2rem; }
.mobile .top { margin: 5rem 0 1.3rem 41.7rem; }
.mobile .newsletter { height: 24.9rem; margin: 0 0 0 -.5rem; padding: 4.8rem 0 0 2.4rem; }
.mobile .footer { height: 65.4rem; margin-left: -.5rem; padding: 6rem 0 0 11.5rem; }
.mobile .links li { width: 20.3rem; }
.mobile .contact { margin: 5.1rem 0 0 .6rem; height: 12.4rem; }
.mobile .labels { width: 13.2rem; }
.mobile .scribbles { margin-top: .2rem; }
.mobile .connect { margin-top: 7.7rem; }
.mobile .connect p { margin-left: 24.4rem; }
.mobile .social { margin: 4.4rem 0 0 22.3rem; }
.mobile .copyright { height: 7.2rem; margin-left: -.5rem; padding: .6rem 3.8rem 0 0; }
```
